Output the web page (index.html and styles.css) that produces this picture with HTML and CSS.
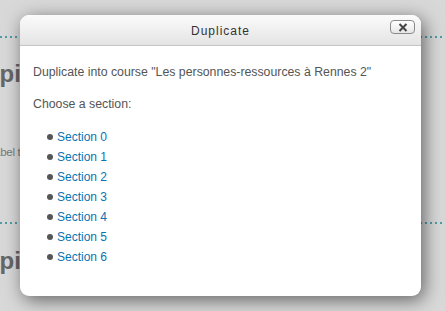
FILE: index.html
```html
<!DOCTYPE html>
<html>
<head>
<meta charset="utf-8">
<link rel="stylesheet" href="styles.css">
</head>
<body>
<div class="page">
  <div class="dots dots-top"></div>
  <div class="heading">Topic</div>
  <div class="label">Label text</div>
  <div class="dots dots-bottom"></div>
  <div class="heading heading-2">Topic</div>
</div>
<div class="dialog">
  <div class="dialog-head">
    <span class="title">Duplicate</span>
    <button class="close" type="button" aria-label="Close">
      <svg width="10" height="9" viewBox="0 0 10 9"><path d="M1.5 1 L8.5 8 M8.5 1 L1.5 8" stroke="#444" stroke-width="2" fill="none"/></svg>
    </button>
  </div>
  <div class="dialog-body">
    <p>Duplicate into course "Les personnes-ressources à Rennes 2"</p>
    <p>Choose a section:</p>
    <ul class="sections">
      <li><a href="#">Section 0</a></li>
      <li><a href="#">Section 1</a></li>
      <li><a href="#">Section 2</a></li>
      <li><a href="#">Section 3</a></li>
      <li><a href="#">Section 4</a></li>
      <li><a href="#">Section 5</a></li>
      <li><a href="#">Section 6</a></li>
    </ul>
  </div>
</div>
</body>
</html>
```
FILE: styles.css
```css
html, body {
  margin: 0;
  padding: 0;
  width: 445px;
  height: 311px;
  overflow: hidden;
  background: #d8d8d8;
  font-family: "Liberation Sans", Arial, sans-serif;
}
.page {
  padding-top: 36px;
}
.dots {
  height: 2px;
  background: repeating-linear-gradient(90deg, #4f9ca6 0 2px, transparent 2px 5px);
}
.heading {
  margin: 22px 0 0 -28px;
  font-size: 24px;
  font-weight: bold;
  color: #666;
  line-height: 28px;
}
.label {
  margin: 57px 0 0 -12px;
  font-size: 11.5px;
  letter-spacing: -0.3px;
  color: #777;
  line-height: 14px;
}
.dots-bottom {
  margin-top: 63px;
}
.heading-2 {
  margin-top: 23px;
}
.dialog {
  position: absolute;
  left: 20px;
  top: 15px;
  width: 401px;
  height: 281px;
  background: #fff;
  border-radius: 9px;
  box-shadow: 3px 4px 18px rgba(0,0,0,0.55);
  overflow: hidden;
}
.dialog-head {
  height: 30px;
  border-bottom: 1px solid #c4c4c4;
  background: linear-gradient(#fbfbfb, #e4e4e4);
  display: flex;
  align-items: center;
  justify-content: center;
  position: relative;
}
.title {
  font-size: 12px;
  letter-spacing: 1px;
  color: #333;
  margin-top: 2px;
}
.close {
  position: absolute;
  right: 6px;
  top: 5px;
  width: 25px;
  height: 14px;
  padding: 0;
  border: 1px solid #8a8a8a;
  border-radius: 4px;
  background: linear-gradient(#ffffff, #e6e6e6);
  display: flex;
  align-items: center;
  justify-content: center;
}
.dialog-body {
  padding: 16px 13px 0;
  font-size: 12px;
  line-height: 20px;
  color: #555;
}
.dialog-body p {
  margin: 0 0 12px;
  font-size: 12.3px;
}
.sections {
  margin: 13px 0 0;
  padding: 0 0 0 24px;
  list-style: none;
}
.sections li {
  position: relative;
}
.sections li::before {
  content: "";
  position: absolute;
  left: -10px;
  top: 7px;
  width: 6px;
  height: 6px;
  border-radius: 50%;
  background: #555;
}
.sections a {
  color: #0a73b0;
  text-decoration: none;
}
```
